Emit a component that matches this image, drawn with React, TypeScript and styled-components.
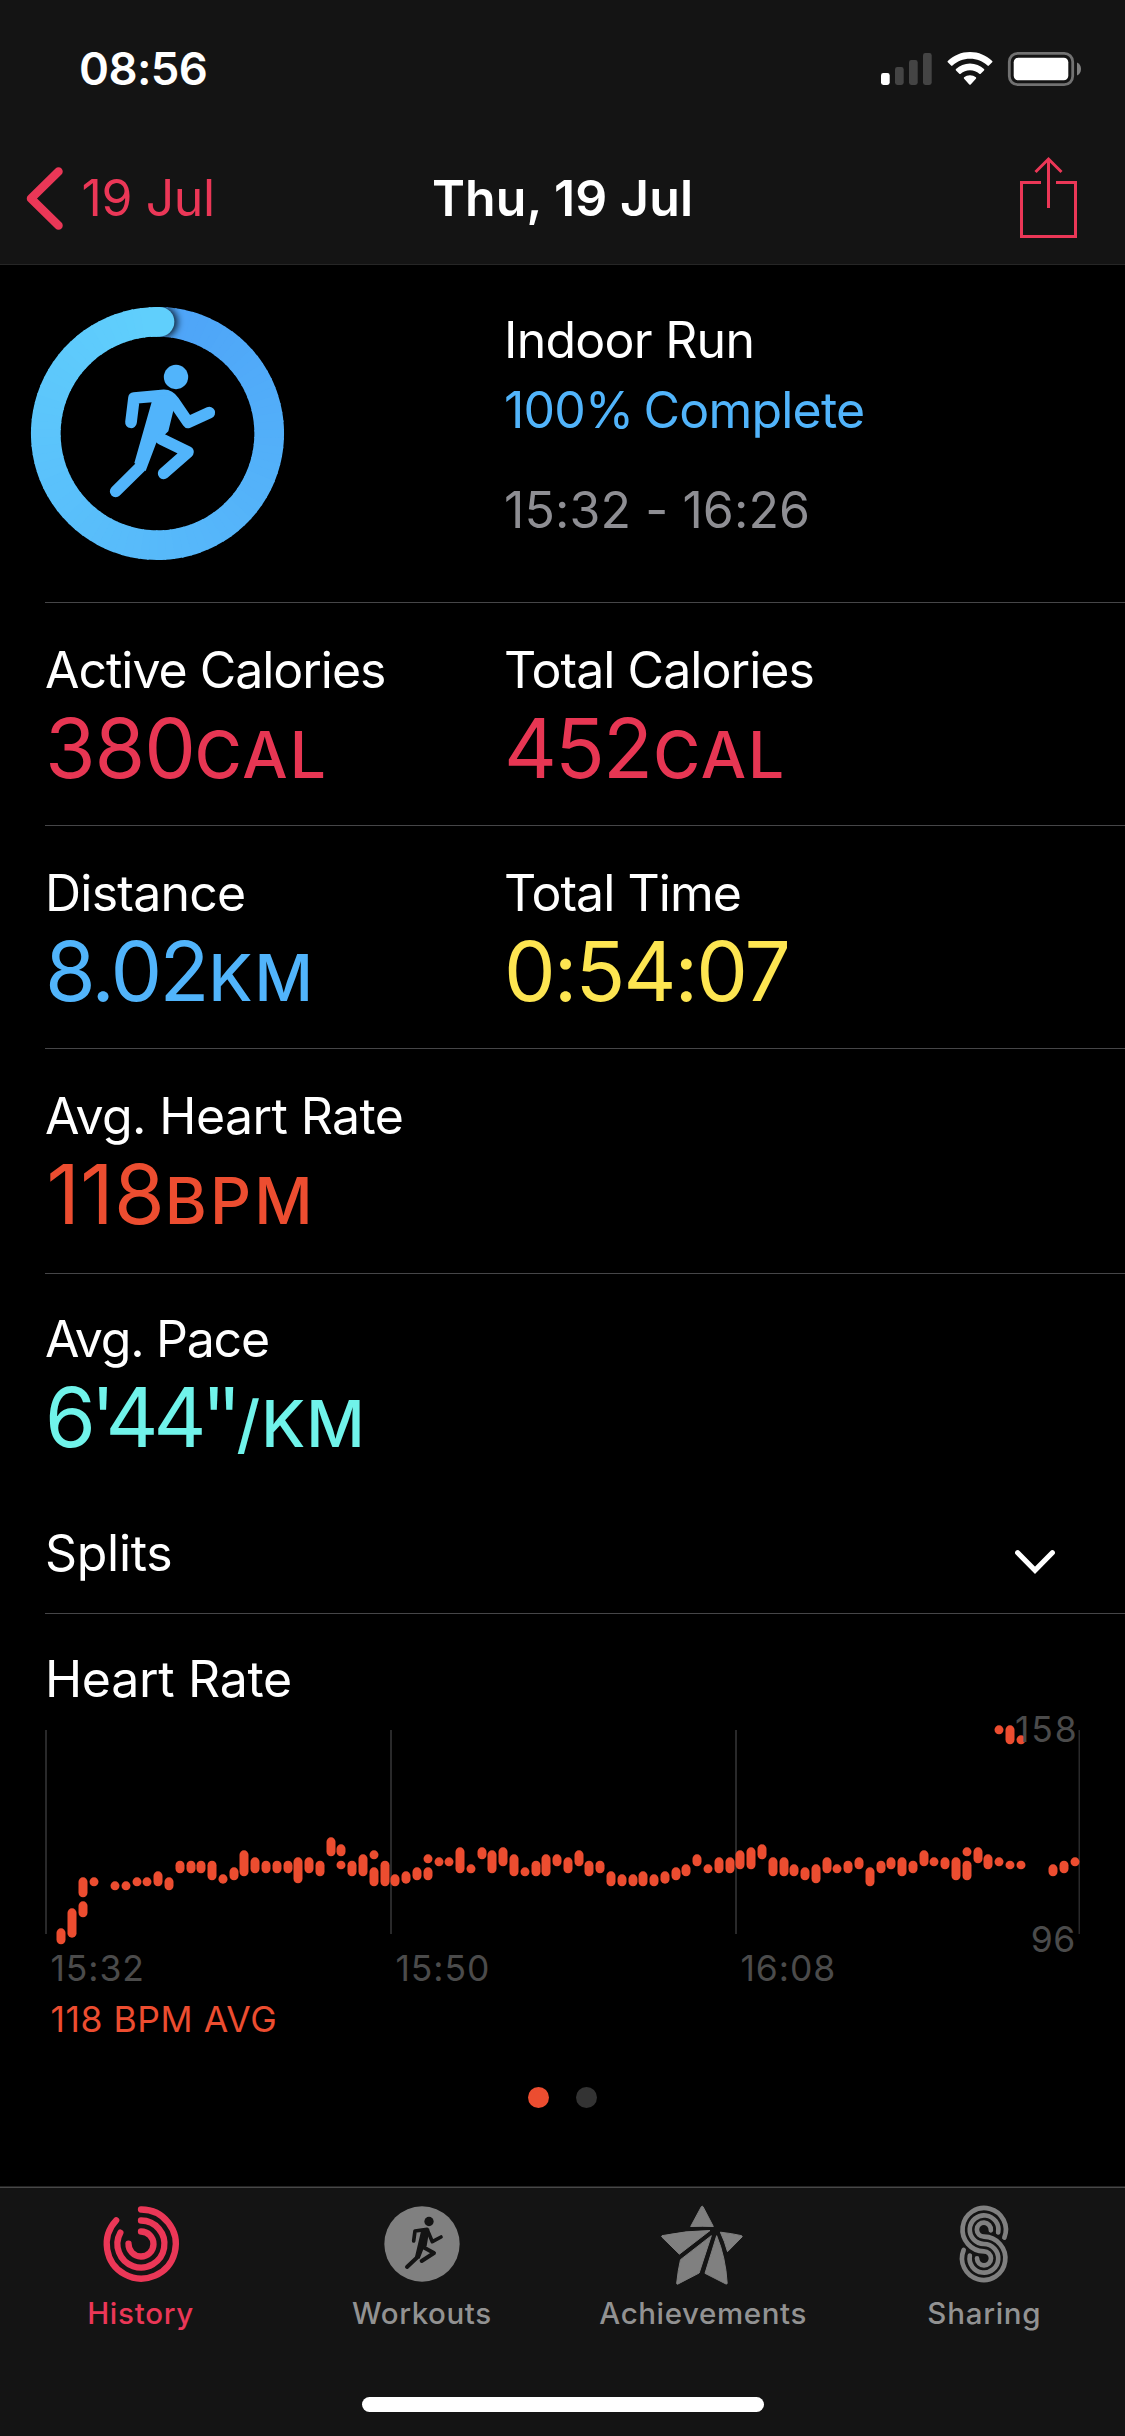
import React from "react";
import styled, { createGlobalStyle } from "styled-components";

const color = {
  bar: "#141414",
  pink: "#eb3757",
  red: "#e73653",
  blue: "#51b4fb",
  yellow: "#fde551",
  orange: "#ec4d30",
  mint: "#70f3ea",
  muted: "#8e8e93",
  axis: "#4b4b4b",
  rule: "#464648",
  grid: "#29292a",
  tab: "#808080",
  tabText: "#929292",
};

const GlobalStyle = createGlobalStyle`
  body {
    margin: 0;
    background: #000;
    color: #fff;
    font-family: Inter, "Liberation Sans", sans-serif;
  }
  svg { display: block; flex: none; overflow: visible; }
`;

const Screen = styled.div`
  width: 1125px;
  height: 2436px;
  display: flex;
  flex-direction: column;
  overflow: hidden;
  background: #000;
`;

const Label = styled.div<{ $ls?: number; $color?: string }>`
  font-size: 50px;
  line-height: 60px;
  letter-spacing: ${(p) => p.$ls ?? 0}px;
  color: ${(p) => p.$color ?? "#fff"};
  white-space: nowrap;
`;

/* ---------- header ---------- */

const Header = styled.header`
  background: ${color.bar};
  border-bottom: 1px solid #262626;
`;

const StatusBar = styled.div`
  height: 138px;
  box-sizing: border-box;
  padding: 0 44px 0 79px;
  display: flex;
  align-items: center;
  justify-content: space-between;
`;

const Clock = styled.div`
  font-size: 45.5px;
  font-weight: 600;
  line-height: 56px;
  letter-spacing: -0.6px;
`;

const StatusIcons = styled.div`
  display: flex;
  align-items: center;
  gap: 15px;
`;

const NavBar = styled.div`
  height: 126px;
  box-sizing: border-box;
  padding: 0 48px 6px 26px;
  display: grid;
  grid-template-columns: 1fr auto 1fr;
  align-items: center;
`;

const BackButton = styled.div`
  display: flex;
  align-items: center;
  gap: 18.5px;
`;

const Title = styled(Label)`
  font-weight: 600;
  transform: translateX(11px);
`;

const ShareButton = styled.div`
  justify-self: end;
  padding-bottom: 2px;
`;

/* ---------- summary ---------- */

const Summary = styled.section`
  height: 337px;
  box-sizing: border-box;
  padding-left: 31px;
  display: grid;
  grid-template-columns: 473px 1fr;
`;

const RingCell = styled.div`
  padding-top: 42px;
`;

const SummaryText = styled.div`
  padding-top: 45px;
  display: flex;
  flex-direction: column;
`;

const Complete = styled(Label)`
  margin: 10px 0 40px;
  word-spacing: -3px;
`;

/* ---------- metrics ---------- */

const MetricRow = styled.section<{ $height: number; $top?: number }>`
  height: ${(p) => p.$height}px;
  box-sizing: border-box;
  margin-left: 45px;
  padding-top: ${(p) => p.$top ?? 37}px;
  border-top: 1px solid ${color.rule};
  display: grid;
  grid-template-columns: 459px 1fr;
`;

const Value = styled.div<{ $color: string; $ls: number; $indent?: number }>`
  margin-top: 4px;
  padding-left: ${(p) => p.$indent ?? 0}px;
  font-size: 82px;
  line-height: 90px;
  letter-spacing: ${(p) => p.$ls}px;
  color: ${(p) => p.$color};
  white-space: nowrap;
`;

const Unit = styled.span<{ $ls: number; $gap: number }>`
  font-size: 64px;
  font-weight: 500;
  line-height: 1;
  margin-left: ${(p) => p.$gap}px;
  letter-spacing: ${(p) => p.$ls}px;
`;

const Part = styled.span<{ $ls: number }>`
  letter-spacing: ${(p) => p.$ls}px;
`;

const SplitsRow = styled.section`
  height: 128px;
  box-sizing: border-box;
  padding: 8px 70px 0 45px;
  display: flex;
  align-items: center;
  justify-content: space-between;
`;

const ChevronBox = styled.div`
  padding-top: 18px;
`;

/* ---------- chart ---------- */

const ChartSection = styled.section`
  flex: 1;
  margin-left: 45px;
  padding-top: 35px;
  border-top: 1px solid ${color.rule};
`;

const Plot = styled.div`
  position: relative;
  height: 237px;
`;

const ScaleLabel = styled.div<{ $top: number; $right: number; $ls: number }>`
  position: absolute;
  top: ${(p) => p.$top}px;
  right: ${(p) => p.$right}px;
  font-size: 35.5px;
  line-height: 44px;
  letter-spacing: ${(p) => p.$ls}px;
  color: ${color.axis};
`;

const TimeAxis = styled.div`
  padding: 1px 0 0 5.5px;
  display: grid;
  grid-template-columns: 345px 345px 1fr;
  font-size: 35.5px;
  line-height: 44px;
  letter-spacing: 0.9px;
  color: ${color.axis};
`;

const Average = styled.div`
  margin-top: 7px;
  padding-left: 5.5px;
  font-size: 35.5px;
  line-height: 44px;
  letter-spacing: 0.55px;
  color: ${color.orange};
`;

const Pager = styled.div`
  margin: 45px 0 0 -45px;
  display: flex;
  justify-content: center;
  gap: 27px;
`;

const Dot = styled.span<{ $active?: boolean }>`
  width: 21px;
  height: 21px;
  border-radius: 50%;
  background: ${(p) => (p.$active ? color.orange : "#333")};
`;

/* ---------- tab bar ---------- */

const TabBar = styled.nav`
  height: 250px;
  box-sizing: border-box;
  background: ${color.bar};
  border-top: 1px solid #242424;
  box-shadow: inset 0 1px #484848;
  display: flex;
  flex-direction: column;
  align-items: center;
`;

const Tabs = styled.div`
  width: 100%;
  padding-top: 17px;
  display: grid;
  grid-template-columns: repeat(4, 1fr);
`;

const Tab = styled.div<{ $active?: boolean }>`
  display: flex;
  flex-direction: column;
  align-items: center;
  gap: 11px;
  color: ${(p) => (p.$active ? color.pink : color.tabText)};
`;

const TabLabel = styled.div<{ $ls: number }>`
  font-size: 29.5px;
  font-weight: 460;
  line-height: 36px;
  letter-spacing: ${(p) => p.$ls}px;
`;

const HomeIndicator = styled.div`
  width: 402px;
  height: 15px;
  margin-top: 66px;
  border-radius: 8px;
  background: #fff;
`;

/* ---------- drawings ---------- */

const SignalIcon = () => (
  <svg width="51" height="34" viewBox="881 52 51 34">
    <rect x="881" y="73" width="8.7" height="12" rx="2.4" fill="#fff" />
    <rect x="895" y="67" width="8.7" height="18" rx="2.4" fill="#444" />
    <rect x="909" y="60" width="8.7" height="25" rx="2.4" fill="#444" />
    <rect x="923" y="53" width="8.7" height="32" rx="2.4" fill="#444" />
  </svg>
);

const WifiIcon = () => (
  <svg width="46" height="34" viewBox="0 0 46 34" fill="#fff">
    <path d="M23 0C31.600 0 39.400 3.400 45.200 8.900Q45.900 9.600 45.200 10.300L41.900 13.600Q41.200 14.200 40.500 13.600C35.900 9.400 29.800 6.800 23 6.800C16.200 6.800 10.100 9.400 5.500 13.600Q4.800 14.200 4.100 13.600L0.800 10.300Q0.100 9.600 0.800 8.900C6.600 3.400 14.400 0 23 0Z" />
    <path d="M23 11.600C28.400 11.600 33.300 13.700 37 17.100Q37.700 17.800 37 18.500L33.700 21.800Q33 22.400 32.300 21.800C29.800 19.600 26.600 18.300 23 18.300C19.400 18.300 16.200 19.600 13.700 21.800Q13 22.400 12.300 21.800L9 18.500Q8.300 17.800 9 17.100C12.700 13.700 17.600 11.600 23 11.600Z" />
    <path d="M23 23.200C25.200 23.200 27.300 24 28.900 25.300Q29.600 26 28.900 26.700L23.700 32.500Q23 33.200 22.300 32.500L17.100 26.700Q16.400 26 17.100 25.300C18.700 24 20.800 23.200 23 23.200Z" />
  </svg>
);

const BatteryIcon = () => (
  <svg width="73" height="34" viewBox="1008 52 73 34">
    <rect x="1009.300" y="53.300" width="63.400" height="31.400" rx="8.500" fill="none" stroke="#727272" strokeWidth="2.800" />
    <rect x="1013.700" y="57.800" width="54.600" height="22.400" rx="4.500" fill="#fff" />
    <path d="M1077 62.500C1079.500 63.600 1081 66 1081 69C1081 72 1079.500 74.400 1077 75.500Z" fill="#808080" />
  </svg>
);

const BackChevron = () => (
  <svg width="37" height="63" viewBox="0 0 37 63" fill="none" stroke={color.pink} strokeWidth="8.500" strokeLinecap="round" strokeLinejoin="round">
    <path d="M32.500 4.500L5 31.500L32.500 58.500" />
  </svg>
);

const ShareIcon = () => (
  <svg width="57" height="81" viewBox="0 0 57 81" fill="none" stroke={color.pink} strokeWidth="3">
    <path d="M21 25.500H1.500V79.500H55.500V25.500H36" />
    <path d="M28.500 2V51" />
    <path d="M15.500 15L28.500 2L41.500 15" />
  </svg>
);

const ChevronDown = () => (
  <svg width="40" height="24" viewBox="0 0 40 24" fill="none" stroke="#fff" strokeWidth="5.200" strokeLinecap="round" strokeLinejoin="miter">
    <path d="M2.700 2.700L20 20.300L37.300 2.700" />
  </svg>
);

const mix = (a: number[], b: number[], t: number) =>
  `rgb(${a.map((v, i) => Math.round(v + (b[i] - v) * t)).join(",")})`;

const polar = (deg: number, r: number) => {
  const a = ((deg - 90) * Math.PI) / 180;
  return `${(126.5 + r * Math.cos(a)).toFixed(2)} ${(126.5 + r * Math.sin(a)).toFixed(2)}`;
};

const RING_STEPS = 90;
const RING_RADIUS = 111.7;
const segments = Array.from({ length: RING_STEPS }, (_, i) => {
  const from = (i * 360) / RING_STEPS;
  const to = from + 360 / RING_STEPS + (i < RING_STEPS - 1 ? 0.8 : 0);
  return {
    d: `M${polar(from, RING_RADIUS)}A${RING_RADIUS} ${RING_RADIUS} 0 0 1 ${polar(to, RING_RADIUS)}`,
    stroke: mix([78, 164, 248], [96, 207, 252], i / (RING_STEPS - 1)),
  };
});

const ActivityRing = () => (
  <svg width="253" height="253" viewBox="0 0 253 253">
    <defs>
      <filter id="capShadow" x="-60%" y="-60%" width="220%" height="220%">
        <feGaussianBlur stdDeviation="3.500" />
      </filter>
      <clipPath id="ringBand">
        <path clipRule="evenodd" d="M126.500 0a126.500 126.500 0 1 1 -.01 0ZM126.500 29.700a96.800 96.800 0 1 0 .01 0Z" />
      </clipPath>
    </defs>
    {segments.slice(0, 80).map((s) => (
      <path key={s.d} d={s.d} fill="none" stroke={s.stroke} strokeWidth="29.700" />
    ))}
    <g clipPath="url(#ringBand)">
      <circle cx="131" cy="15" r="15.500" fill="#000" fillOpacity="0.800" filter="url(#capShadow)" />
    </g>
    {segments.slice(80).map((s) => (
      <path key={s.d} d={s.d} fill="none" stroke={s.stroke} strokeWidth="29.700" />
    ))}
    <path d="M126 14.850L128.500 14.850" stroke="rgb(96,207,252)" strokeWidth="29.700" strokeLinecap="round" />
    <g transform="scale(.33333) translate(-93 -81)" fill={color.blue} stroke={color.blue} strokeLinecap="round" strokeLinejoin="round">
      <circle cx="528" cy="291" r="36.500" stroke="none" />
      <path d="M393 427L402 354L492 346Q509 346 521 364L564 427L628 398" fill="none" strokeWidth="35" />
      <path d="M455 366L403 549L437 573L469 488L505 454L520 392L530 350L480 345Z" stroke="none" />
      <path d="M421 561L347 634" fill="none" strokeWidth="35" />
      <path d="M484 477L564 516L491 580" fill="none" strokeWidth="35" />
    </g>
  </svg>
);

const HistoryIcon = () => (
  <svg width="80" height="80" viewBox="183 102 240 240" fill="none" stroke={color.pink} strokeWidth="19" strokeLinecap="round">
    <path d="M303 118.500A103.500 103.500 0 1 1 228.500 151" />
    <path d="M303 151.500A70.500 70.500 0 1 1 241 188" />
    <path d="M303 184.500A37.500 37.500 0 1 1 265.500 221" />
  </svg>
);

const WorkoutsIcon = () => (
  <svg width="80" height="80" viewBox="1026 102 240 240">
    <circle cx="1146" cy="222" r="113" fill={color.tab} />
    <g fill={color.bar} stroke={color.bar} strokeLinecap="round" strokeLinejoin="round">
      <circle cx="1167" cy="154.500" r="14" stroke="none" />
      <path d="M1121 213L1125 183L1161 178L1177 215L1203 201" fill="none" strokeWidth="11" />
      <path d="M1143 184L1125 260L1139 266L1150 238L1160 228L1164 204L1168 176L1150 176Z" stroke="none" />
      <path d="M1132 262L1101 291" fill="none" strokeWidth="12" />
      <path d="M1153 233L1182 249L1145 273" fill="none" strokeWidth="12" />
    </g>
  </svg>
);

const AchievementsIcon = () => (
  <svg width="84" height="80" viewBox="303 102 252 240" fill={color.tab} stroke={color.tab} strokeWidth="3" strokeLinejoin="round">
    <path d="M424 110Q426.500 107 429 110L460 169.500Q427 168 392 169.500Z" />
    <path d="M306 197Q378 182 450 181.500L358 252.500L305.500 201Q304 198 306 197Z" />
    <path d="M361.500 269L454 197L417.500 309L353 342.500Q350 343 350 340Q354 300 361.500 269Z" />
    <path d="M470 197Q497 262 501.500 339Q502 343 498 342L435 310Z" />
    <path d="M481 186.500Q514 190 545 197Q547.500 198.500 546 201L502.500 245Q494 213 481 186.500Z" />
  </svg>
);

const SharingIcon = () => (
  <svg width="80" height="80" viewBox="1152 102 240 240" fill="none" stroke={color.tab} strokeWidth="14" strokeLinecap="round">
    <path d="M1333 203A65 65 0 1 0 1272 244A21 21 0 1 1 1251 265" />
    <path d="M1314.500 187A43 43 0 1 0 1272 222A43 43 0 1 1 1229.500 257" />
    <path d="M1292.500 181A21 21 0 1 0 1272 200A65 65 0 1 1 1211 240" />
  </svg>
);

/* Heart-rate ranges as [x, top, bottom]; x in px, top and bottom in thirds of a px. */
const beats: [number, number, number][] = [
  [61, 685, 733], [72, 625, 713], [83, 532, 592], [83, 604, 652], [94, 532, 559],
  [115, 544, 571], [126, 544, 571], [137, 532, 559], [147, 532, 559], [158, 514, 559],
  [169, 532, 571], [180, 482, 520], [191, 482, 520], [201, 482, 520], [212, 482, 541],
  [223, 523, 551], [234, 502, 541], [244, 451, 529], [255, 472, 520], [266, 482, 520],
  [277, 482, 520], [288, 482, 520], [298, 472, 550], [309, 472, 520], [320, 482, 529],
  [331, 412, 469], [341, 433, 469], [341, 482, 508], [352, 482, 529], [363, 463, 529],
  [374, 451, 478], [374, 502, 559], [385, 482, 559], [395, 523, 559], [406, 514, 551],
  [417, 502, 541], [428, 463, 490], [428, 502, 541], [439, 472, 499], [449, 472, 499],
  [460, 442, 520], [471, 493, 520], [482, 442, 478], [492, 451, 520], [503, 442, 499],
  [514, 463, 529], [525, 502, 529], [536, 482, 529], [546, 463, 529], [557, 463, 499],
  [568, 472, 520], [579, 451, 499], [589, 482, 529], [600, 482, 520], [611, 514, 559],
  [622, 523, 559], [633, 523, 559], [643, 514, 559], [654, 523, 559], [665, 514, 551],
  [676, 502, 541], [686, 493, 529], [697, 463, 499], [708, 493, 520], [719, 472, 520],
  [730, 472, 520], [740, 451, 508], [751, 442, 508], [762, 433, 478], [773, 472, 529],
  [784, 472, 529], [794, 493, 529], [805, 502, 541], [816, 493, 550], [827, 472, 520],
  [837, 493, 520], [848, 482, 520], [859, 472, 508], [870, 502, 559], [881, 482, 520],
  [891, 472, 508], [902, 472, 529], [913, 482, 520], [924, 451, 499], [934, 472, 499],
  [945, 472, 508], [956, 472, 541], [967, 442, 469], [967, 482, 541], [978, 442, 490],
  [988, 463, 508], [999, 472, 499], [1010, 482, 508], [1021, 482, 508], [1053, 493, 529],
  [1064, 482, 520], [1075, 472, 499], [999, 76, 103], [1010, 76, 133], [1021, 106, 133],
];

const HeartRatePlot = () => (
  <svg width="1035" height="237" viewBox="45 9 1035 237">
    {[45, 390, 735, 1078.500].map((x, i) => (
      <rect key={x} x={x} y="30" width={i === 3 ? 1.500 : 2} height="204" fill={color.grid} />
    ))}
    {beats.map(([x, top, bottom]) => (
      <rect key={`${x}-${top}`} x={x - 4.500} y={top / 3} width="9" height={(bottom - top) / 3} rx="4.500" fill={color.orange} />
    ))}
  </svg>
);

/* ---------- screen ---------- */

export default function App() {
  return (
    <Screen>
      <GlobalStyle />
      <Header>
        <StatusBar>
          <Clock>08:56</Clock>
          <StatusIcons>
            <SignalIcon />
            <WifiIcon />
            <BatteryIcon />
          </StatusIcons>
        </StatusBar>
        <NavBar>
          <BackButton>
            <BackChevron />
            <Label $ls={-0.4} $color={color.pink}>19 Jul</Label>
          </BackButton>
          <Title $ls={0.09}>Thu, 19 Jul</Title>
          <ShareButton>
            <ShareIcon />
          </ShareButton>
        </NavBar>
      </Header>

      <Summary>
        <RingCell>
          <ActivityRing />
        </RingCell>
        <SummaryText>
          <Label $ls={-0.75}>Indoor Run</Label>
          <Complete $ls={-0.8} $color={color.blue}>100% Complete</Complete>
          <Label $ls={0.1} $color={color.muted}>15:32 - 16:26</Label>
        </SummaryText>
      </Summary>

      <MetricRow $height={223}>
        <div>
          <Label $ls={-1.03}>Active Calories</Label>
          <Value $color={color.red} $ls={-1.09}>
            380<Unit $ls={1.95} $gap={0}>CAL</Unit>
          </Value>
        </div>
        <div>
          <Label $ls={-0.94}>Total Calories</Label>
          <Value $color={color.red} $ls={-1.86}>
            452<Unit $ls={1.9} $gap={2}>CAL</Unit>
          </Value>
        </div>
      </MetricRow>

      <MetricRow $height={223}>
        <div>
          <Label $ls={-0.75}>Distance</Label>
          <Value $color={color.blue} $ls={-2.52}>
            8.02<Unit $ls={1.8} $gap={1.5}>KM</Unit>
          </Value>
        </div>
        <div>
          <Label $ls={-0.96}>Total Time</Label>
          <Value $color={color.yellow} $ls={-1.9}>0:54:07</Value>
        </div>
      </MetricRow>

      <MetricRow $height={225}>
        <div>
          <Label $ls={-0.6}>Avg. Heart Rate</Label>
          <Value $color={color.orange} $ls={0.45} $indent={1.5}>
            118<Unit $ls={3.2} $gap={-0.5}>BPM</Unit>
          </Value>
        </div>
      </MetricRow>

      <MetricRow $height={212} $top={35}>
        <div>
          <Label $ls={-1.25}>Avg. Pace</Label>
          <Value $color={color.mint} $ls={0}>
            <Part $ls={-5}>6</Part>
            <Part $ls={-10}>'</Part>
            <Part $ls={-5}>44</Part>
            <Part $ls={-9}>''</Part>
            <Unit $ls={1.02} $gap={4}>/KM</Unit>
          </Value>
        </div>
      </MetricRow>

      <SplitsRow>
        <Label $ls={-0.3}>Splits</Label>
        <ChevronBox>
          <ChevronDown />
        </ChevronBox>
      </SplitsRow>

      <ChartSection>
        <Label $ls={-0.3}>Heart Rate</Label>
        <Plot>
          <HeartRatePlot />
          <ScaleLabel $top={-1} $right={46.5} $ls={1.84}>158</ScaleLabel>
          <ScaleLabel $top={209} $right={49.5} $ls={0.3}>96</ScaleLabel>
        </Plot>
        <TimeAxis>
          <span>15:32</span>
          <span>15:50</span>
          <span>16:08</span>
        </TimeAxis>
        <Average>118 BPM AVG</Average>
        <Pager>
          <Dot $active />
          <Dot />
        </Pager>
      </ChartSection>

      <TabBar>
        <Tabs>
          <Tab $active>
            <HistoryIcon />
            <TabLabel $ls={0.75}>History</TabLabel>
          </Tab>
          <Tab>
            <WorkoutsIcon />
            <TabLabel $ls={0.6}>Workouts</TabLabel>
          </Tab>
          <Tab>
            <AchievementsIcon />
            <TabLabel $ls={0.6}>Achievements</TabLabel>
          </Tab>
          <Tab>
            <SharingIcon />
            <TabLabel $ls={0.75}>Sharing</TabLabel>
          </Tab>
        </Tabs>
        <HomeIndicator />
      </TabBar>
    </Screen>
  );
}
